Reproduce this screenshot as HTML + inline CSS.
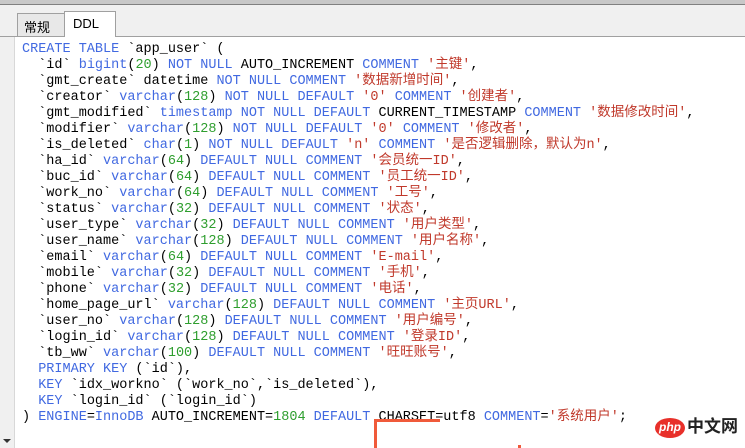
<!DOCTYPE html>
<html><head><meta charset="utf-8"><style>
body{margin:0;width:745px;height:448px;overflow:hidden;background:#fff;position:relative;font-family:"Liberation Sans","Noto Sans CJK SC",sans-serif}
.top{position:absolute;left:0;top:0;width:745px;height:36px;background:#f0f0f0;border-bottom:1px solid #a0a0a0}
.topline{position:absolute;left:0;top:0;width:745px;height:4px;background:#c8c8c8;border-bottom:1px solid #808080}
.tab{position:absolute;font-size:13px;box-sizing:border-box;border:1px solid #a0a0a0;border-bottom:none}
.t1{left:17px;top:13px;width:48px;height:23px;background:#e8e8e8;padding:3px 0 0 6px}
.t2{left:64px;top:11px;width:52px;height:26px;background:#fff;padding:4px 0 0 8px}
.side{position:absolute;left:0;top:37px;width:14px;height:411px;background:#f0f0f0;border-right:1px solid #d8d8d8}
pre{position:absolute;left:22px;top:42px;margin:0;font-family:"Liberation Mono","Noto Sans CJK SC",monospace;font-size:13.5px;line-height:16px;color:#000}
.k{color:#4169e1}.n{color:#2e9e2e}.s{color:#c0392b}
.red{position:absolute;background:#f05a3a}
</style></head><body>
<div class="top"><div class="topline"></div></div>
<div class="tab t1">常规</div><div class="tab t2">DDL</div>
<div class="side"><div style="position:absolute;left:3px;top:402px;border:4px solid transparent;border-top:4px solid #333;"></div></div>
<pre><span class="k">CREATE TABLE</span> `app_user` (
  `id` <span class="k">bigint</span>(<span class="n">20</span>) <span class="k">NOT NULL</span> AUTO_INCREMENT <span class="k">COMMENT</span> <span class="s">'主键'</span>,
  `gmt_create` datetime <span class="k">NOT NULL COMMENT</span> <span class="s">'数据新增时间'</span>,
  `creator` <span class="k">varchar</span>(<span class="n">128</span>) <span class="k">NOT NULL DEFAULT</span> <span class="s">'0'</span> <span class="k">COMMENT</span> <span class="s">'创建者'</span>,
  `gmt_modified` <span class="k">timestamp NOT NULL DEFAULT</span> CURRENT_TIMESTAMP <span class="k">COMMENT</span> <span class="s">'数据修改时间'</span>,
  `modifier` <span class="k">varchar</span>(<span class="n">128</span>) <span class="k">NOT NULL DEFAULT</span> <span class="s">'0'</span> <span class="k">COMMENT</span> <span class="s">'修改者'</span>,
  `is_deleted` <span class="k">char</span>(<span class="n">1</span>) <span class="k">NOT NULL DEFAULT</span> <span class="s">'n'</span> <span class="k">COMMENT</span> <span class="s">'是否逻辑删除，默认为n'</span>,
  `ha_id` <span class="k">varchar</span>(<span class="n">64</span>) <span class="k">DEFAULT NULL COMMENT</span> <span class="s">'会员统一ID'</span>,
  `buc_id` <span class="k">varchar</span>(<span class="n">64</span>) <span class="k">DEFAULT NULL COMMENT</span> <span class="s">'员工统一ID'</span>,
  `work_no` <span class="k">varchar</span>(<span class="n">64</span>) <span class="k">DEFAULT NULL COMMENT</span> <span class="s">'工号'</span>,
  `status` <span class="k">varchar</span>(<span class="n">32</span>) <span class="k">DEFAULT NULL COMMENT</span> <span class="s">'状态'</span>,
  `user_type` <span class="k">varchar</span>(<span class="n">32</span>) <span class="k">DEFAULT NULL COMMENT</span> <span class="s">'用户类型'</span>,
  `user_name` <span class="k">varchar</span>(<span class="n">128</span>) <span class="k">DEFAULT NULL COMMENT</span> <span class="s">'用户名称'</span>,
  `email` <span class="k">varchar</span>(<span class="n">64</span>) <span class="k">DEFAULT NULL COMMENT</span> <span class="s">'E-mail'</span>,
  `mobile` <span class="k">varchar</span>(<span class="n">32</span>) <span class="k">DEFAULT NULL COMMENT</span> <span class="s">'手机'</span>,
  `phone` <span class="k">varchar</span>(<span class="n">32</span>) <span class="k">DEFAULT NULL COMMENT</span> <span class="s">'电话'</span>,
  `home_page_url` <span class="k">varchar</span>(<span class="n">128</span>) <span class="k">DEFAULT NULL COMMENT</span> <span class="s">'主页URL'</span>,
  `user_no` <span class="k">varchar</span>(<span class="n">128</span>) <span class="k">DEFAULT NULL COMMENT</span> <span class="s">'用户编号'</span>,
  `login_id` <span class="k">varchar</span>(<span class="n">128</span>) <span class="k">DEFAULT NULL COMMENT</span> <span class="s">'登录ID'</span>,
  `tb_ww` <span class="k">varchar</span>(<span class="n">100</span>) <span class="k">DEFAULT NULL COMMENT</span> <span class="s">'旺旺账号'</span>,
  <span class="k">PRIMARY KEY</span> (`id`),
  <span class="k">KEY</span> `idx_workno` (`work_no`,`is_deleted`),
  <span class="k">KEY</span> `login_id` (`login_id`)
) <span class="k">ENGINE</span>=<span class="k">InnoDB</span> AUTO_INCREMENT=<span class="n">1804</span> <span class="k">DEFAULT</span> CHARSET=utf8 <span class="k">COMMENT</span>=<span class="s">'系统用户'</span>;</pre>
<div class="red" style="left:374px;top:419px;width:3px;height:29px"></div>
<div class="red" style="left:374px;top:419px;width:66px;height:3px"></div>
<div class="red" style="left:518px;top:445px;width:3px;height:3px"></div>
<div style="position:absolute;left:655px;top:418px;width:30px;height:20px;border-radius:50%;background:#e8302a;color:#fff;font-size:12px;font-style:italic;font-weight:bold;text-align:center;line-height:19px">php</div>
<div style="position:absolute;left:687px;top:416px;font-size:17px;font-weight:bold;color:#222;line-height:22px">中文网</div>
</body></html>
